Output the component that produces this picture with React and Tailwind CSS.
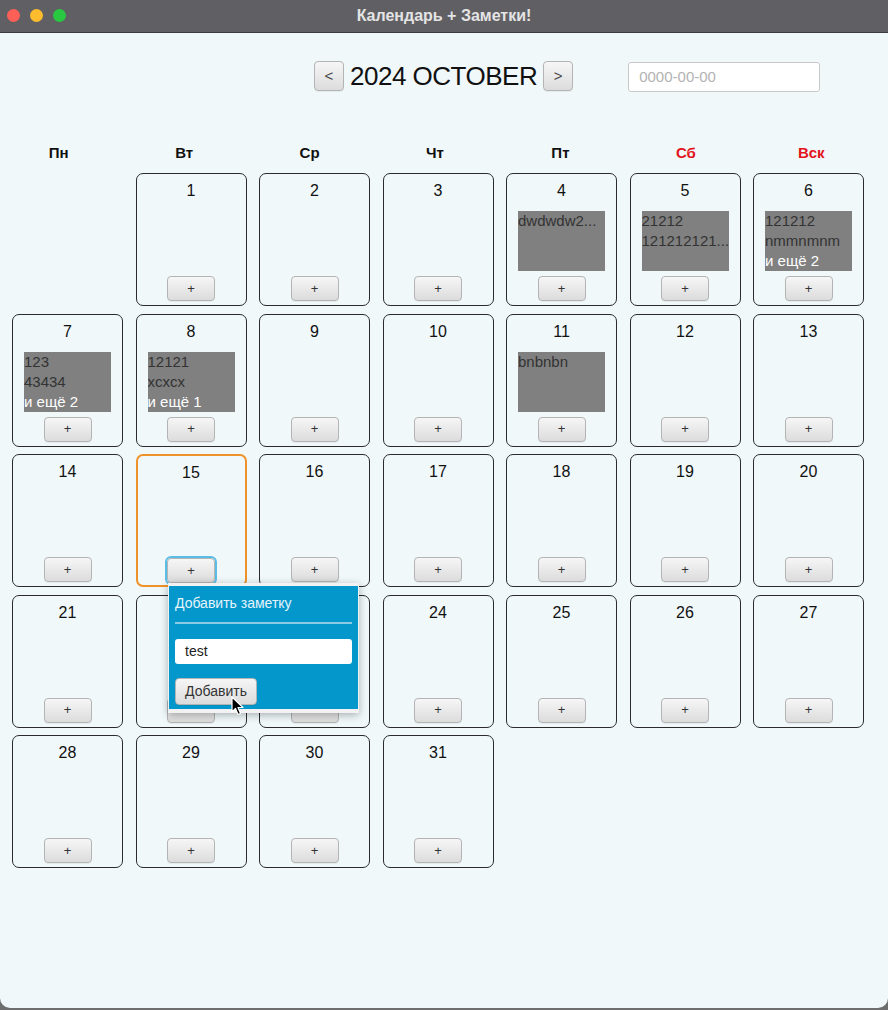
const notes = {
    4: { lines: ['dwdwdw2...'] },
    5: { lines: ['21212', '121212121...'] },
    6: { lines: ['121212', 'nmmnmnm'], more: 'и ещё 2' },
    7: { lines: ['123', '43434'], more: 'и ещё 2' },
    8: { lines: ['12121', 'xcxcx'], more: 'и ещё 1' },
    11: { lines: ['bnbnbn'] },
};

const weekDays = [
    { label: 'Пн', red: false },
    { label: 'Вт', red: false },
    { label: 'Ср', red: false },
    { label: 'Чт', red: false },
    { label: 'Пт', red: false },
    { label: 'Сб', red: true },
    { label: 'Вск', red: true },
];

function GrayButton({ children, className = '' }) {
    return (
        <button
            type="button"
            className={`flex items-center justify-center rounded-[4px] border border-[#b4b4b4] bg-gradient-to-b from-[#f6f6f6] to-[#dcdcdc] text-[#333] shadow-[0_1px_0_rgba(0,0,0,0.05)] ${className}`}
        >
            {children}
        </button>
    );
}

function DayCell({ day, selected }) {
    const note = notes[day];
    return (
        <div
            className={`flex h-[133px] flex-col items-center pt-[8px] ${
                selected ? 'rounded-[7px] border-2 border-[#f0922a]' : 'rounded-[7px] border-[1.5px] border-[#2b2b2b]'
            }`}
        >
            <div className="h-[18px] text-[16px] leading-[18px] text-[#111]">{day}</div>
            <div className="mt-[11px] h-[60px] w-full px-[11px]">
                {note && (
                    <div className="h-[60px] w-full overflow-hidden bg-[#808080] text-[15px] leading-[20px]">
                        {note.lines.map((l) => (
                            <div key={l} className="whitespace-nowrap text-[#333]">{l}</div>
                        ))}
                        {note.more && <div className="whitespace-nowrap text-white">{note.more}</div>}
                    </div>
                )}
            </div>
            <GrayButton
                className={`mt-[5px] h-[25px] w-[48px] text-[13px] ${
                    selected ? 'outline-2 outline-[#5bbde6]' : ''
                }`}
            >
                +
            </GrayButton>
        </div>
    );
}

export default function App() {
    const cells = [null];
    for (let d = 1; d <= 31; d++) cells.push(d);

    return (
        <div className="relative h-[1010px] w-[888px] overflow-hidden bg-[#6e6e6e] font-['Liberation_Sans',Arial,sans-serif]">
            <div className="relative flex h-[33px] items-center justify-center border-b border-[#3a3a3c] bg-[#606064]">
                <div className="absolute left-[7px] top-[9px] flex gap-[10px]">
                    <span className="h-[13px] w-[13px] rounded-full bg-[#fe5f57]" />
                    <span className="h-[13px] w-[13px] rounded-full bg-[#febc2e]" />
                    <span className="h-[13px] w-[13px] rounded-full bg-[#28c840]" />
                </div>
                <span className="text-[16px] font-bold text-[#e4e4e4]">Календарь + Заметки!</span>
            </div>

            <div className="h-[975px] rounded-b-[10px] bg-[#f0f8fa] pt-[28px]">
                <div className="flex h-[30px] items-center pl-[314px]">
                    <GrayButton className="h-[30px] w-[30px] text-[15px] text-[#444]">&lt;</GrayButton>
                    <span className="mx-[6px] text-[26px] leading-[30px] tracking-[-0.5px] text-[#111]">2024 OCTOBER</span>
                    <GrayButton className="h-[30px] w-[30px] text-[15px] text-[#444]">&gt;</GrayButton>
                    <div className="ml-[55px] mt-[2px] flex h-[30px] w-[192px] items-center rounded-[3px] border border-[#c9c9c9] bg-white pl-[10px] text-[15px] text-[#b3b3b3]">
                        0000-00-00
                    </div>
                </div>

                <div className="-ml-[4px] mt-[53px] grid w-[878px] grid-cols-7">
                    {weekDays.map((w) => (
                        <div
                            key={w.label}
                            className={`text-center text-[15px] font-bold leading-[18px] ${w.red ? 'text-[#e3141b]' : 'text-[#111]'}`}
                        >
                            {w.label}
                        </div>
                    ))}
                </div>

                <div className="ml-[12px] mt-[11px] grid w-[852px] grid-cols-[repeat(7,111px)] gap-x-[12.5px] gap-y-[7.5px]">
                    {cells.map((d, i) => (d ? <DayCell key={i} day={d} selected={d === 15} /> : <div key={i} />))}
                </div>
            </div>

            {/* note popup */}
            <div className="absolute left-[168px] top-[583px] h-[130px] w-[191px] border-x border-t-[3px] border-b-[4px] border-[#f2f2f2] bg-[#0497cb] px-[6px] shadow-[0_2px_8px_rgba(0,0,0,0.3)]">
                <div className="pt-[8px] text-[14px] leading-[18px] text-[#e6f4fb]">Добавить заметку</div>
                <div className="mt-[10px] h-[2px] bg-[#8ccbe6]" />
                <div className="mt-[15px] flex h-[25px] w-[177px] items-center rounded-[3px] bg-white pl-[10px] text-[14px] text-[#222]">
                    test
                </div>
                <GrayButton className="mt-[14px] h-[27px] w-[82px] text-[14px]">Добавить</GrayButton>
            </div>

            {/* mouse cursor */}
            <svg className="absolute left-[231px] top-[696px]" width="14" height="20" viewBox="0 0 14 20">
                <path d="M1 1 L1 16 L4.5 12.5 L7 18.5 L9.5 17.5 L7 11.5 L12 11.5 Z" fill="#000" stroke="#fff" strokeWidth="1.2" strokeLinejoin="round" />
            </svg>
        </div>
    );
}
